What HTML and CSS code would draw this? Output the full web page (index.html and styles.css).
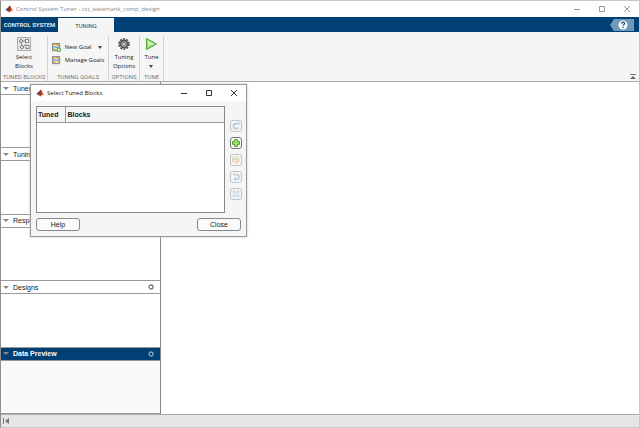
FILE: index.html
```
<!DOCTYPE html>
<html lang="en">
<head>
    <meta charset="UTF-8">
    <meta name="viewport" content="width=device-width, initial-scale=1.0">
    <title>Control System Tuner</title>
    <link rel="stylesheet" href="styles.css">
</head>
<body>
    <!-- Shared icons -->
    <svg class="symbols" aria-hidden="true">
        <symbol id="logo" viewBox="0 0 16 16">
            <path d="M0 9l5-3 2 2-3 4z" fill="#3f86b5"/>
            <path d="M5 6c2 0 3-5 5-5L8 9l-3 4-1-1z" fill="#5c2a30"/>
            <path d="M10 1c2 2 4 8 6 12-2-2-3-2-5 0-1 1-2 2-3 2 0-2-1-3-3-3 3-3 3-8 5-11z" fill="#dd5322"/>
            <path d="M10 1c1 4 1 9-2 14 0-2-1-3-3-3 3-3 3-8 5-11z" fill="#9c2b1d"/>
        </symbol>
        <symbol id="minimize" viewBox="0 0 8 8"><path d="M1 4.500h6" stroke="currentColor" fill="none"/></symbol>
        <symbol id="maximize" viewBox="0 0 8 8"><path d="M1.500 1.500h5v5h-5z" stroke="currentColor" fill="none"/></symbol>
        <symbol id="close" viewBox="0 0 8 8"><path d="M1 1l6 6M7 1l-6 6" stroke="currentColor" fill="none"/></symbol>
        <symbol id="goal" viewBox="0 0 10 10">
            <path d="M.5.500h8v8h-8z" fill="#e3eef6" stroke="#6a7680"/>
            <path d="M1 1h2v2H1zM4 1h4v2H4zM1 6h3v2H1zM6 6h2v2H6z" fill="#e8a83c"/>
            <path d="M1 5l2-1 2 1 3-1" stroke="#2b78ac" fill="none"/>
        </symbol>
        <symbol id="menu" viewBox="0 0 8 8"><circle cx="4" cy="4" r="2" fill="none" stroke="currentColor" stroke-width="1.300"/></symbol>
    </svg>

    <div class="app">
        <header class="titlebar">
            <svg class="logo"><use href="#logo"/></svg>
            <h1 class="title">Control System Tuner - cst_watertank_comp_design</h1>
            <div class="window-buttons">
                <button aria-label="Minimize"><svg><use href="#minimize"/></svg></button>
                <button aria-label="Maximize"><svg><use href="#maximize"/></svg></button>
                <button aria-label="Close window"><svg><use href="#close"/></svg></button>
            </div>
        </header>

        <nav class="tabs">
            <button class="tab">CONTROL SYSTEM</button>
            <button class="tab active">TUNING</button>
            <button class="help" aria-label="Help">
                <svg viewBox="0 0 24 12">
                    <path d="M0 6l4-6h20v12H4z" fill="#6f99b8"/>
                    <circle cx="13" cy="6" r="4.500" fill="#f7fafc"/>
                    <path d="M11.600 4.800c0-2.200 3-2 3-.3 0 1-1.500 1.200-1.500 2.300M13.100 7.800v1.200" fill="none" stroke="#253f59" stroke-width="1.200"/>
                </svg>
            </button>
        </nav>

        <div class="ribbon">
            <section class="group">
                <button class="tool">
                    <svg viewBox="0 0 14 14">
                        <path d="M.5.500h13v13H.5z" fill="#e7e7e7" stroke="#aaa"/>
                        <path d="M5 4h4M4 5l1 4M6 10l3-3" fill="none" stroke="#777" stroke-width=".8"/>
                        <circle cx="4" cy="4" r="1.500" fill="#fff" stroke="#555" stroke-width=".8"/>
                        <circle cx="5" cy="10" r="1.500" fill="#fff" stroke="#555" stroke-width=".8"/>
                        <path d="M8.500 2.500h3v3h-3zM9 8.500h3v3H9z" fill="#fff" stroke="#666" stroke-width=".8"/>
                    </svg>
                    Select<br>Blocks
                </button>
                <span class="group-name">TUNED BLOCKS</span>
            </section>
            <section class="group">
                <div class="tool-list">
                    <button class="tool-row">
                        <svg viewBox="0 0 10 10"><use href="#goal"/><circle cx="7.500" cy="7.500" r="2.500" fill="#56a52a"/><path d="M6 7.500h3M7.500 6v3" stroke="#fff" fill="none"/></svg>
                        New Goal <span class="arrow"></span>
                    </button>
                    <button class="tool-row">
                        <svg><use href="#goal"/></svg>
                        Manage Goals
                    </button>
                </div>
                <span class="group-name">TUNING GOALS</span>
            </section>
            <section class="group">
                <button class="tool">
                    <svg viewBox="0 0 14 14">
                        <circle cx="7" cy="7" r="5" fill="none" stroke="#484848" stroke-width="1.600" stroke-dasharray="2 1.140"/>
                        <circle cx="7" cy="7" r="3.500" fill="#ccc" stroke="#555" stroke-width="1.800"/>
                        <circle cx="7" cy="7" r="1.500" fill="#f5f5f5" stroke="#555" stroke-width=".8"/>
                    </svg>
                    Tuning<br>Options
                </button>
                <span class="group-name">OPTIONS</span>
            </section>
            <section class="group">
                <button class="tool">
                    <svg viewBox="0 0 14 14"><path d="M2.500 1.500l10 5.500-10 5.500z" fill="#a5e088" stroke="#4da22e"/><path d="M4 4l6 3-6 1z" fill="#d3f3c2"/></svg>
                    Tune<span class="arrow"></span>
                </button>
                <span class="group-name">TUNE</span>
            </section>
            <button class="collapse" aria-label="Collapse toolstrip">
                <svg viewBox="0 0 6 6"><path d="M0 .5h6" stroke="#777"/><path d="M3 2l3 3H0z" fill="#666"/></svg>
            </button>
        </div>

        <main class="workspace">
            <aside class="sidebar">
                <section class="panel">
                    <h2><span class="arrow"></span>Tuned Blocks</h2>
                    <div class="panel-body"></div>
                </section>
                <section class="panel">
                    <h2><span class="arrow"></span>Tuning Goals</h2>
                    <div class="panel-body"></div>
                </section>
                <section class="panel">
                    <h2><span class="arrow"></span>Responses</h2>
                    <div class="panel-body"></div>
                </section>
                <section class="panel">
                    <h2><span class="arrow"></span>Designs <button aria-label="Designs menu"><svg><use href="#menu"/></svg></button></h2>
                    <div class="panel-body"></div>
                </section>
                <section class="panel selected">
                    <h2><span class="arrow"></span>Data Preview <button aria-label="Data preview menu"><svg><use href="#menu"/></svg></button></h2>
                    <div class="panel-body"></div>
                </section>
            </aside>
            <div class="document"></div>
        </main>

        <footer class="statusbar">
            <button class="rewind" aria-label="Hide side panel">
                <svg viewBox="0 0 6 6"><path d="M.5 0v6" stroke="#777"/><path d="M6 0v6L2 3z" fill="#777"/></svg>
            </button>
        </footer>

        <div class="dialog" role="dialog" aria-labelledby="dialogTitle">
            <div class="titlebar">
                <svg class="logo"><use href="#logo"/></svg>
                <h2 class="title" id="dialogTitle">Select Tuned Blocks</h2>
                <div class="window-buttons">
                    <button aria-label="Minimize dialog"><svg><use href="#minimize"/></svg></button>
                    <button aria-label="Maximize dialog"><svg><use href="#maximize"/></svg></button>
                    <button aria-label="Close dialog"><svg><use href="#close"/></svg></button>
                </div>
            </div>
            <div class="dialog-content">
                <div class="table-box">
                    <table>
                        <thead>
                            <tr>
                                <th class="tuned">Tuned</th>
                                <th>Blocks</th>
                            </tr>
                        </thead>
                        <tbody></tbody>
                    </table>
                </div>
                <div class="actions">
                    <button disabled aria-label="Refresh"><svg viewBox="0 0 8 8"><path d="M5 2H2.500Q1.500 2 1.500 4t1 2.500H6.500" fill="none" stroke="#5c93bd" stroke-width="1.800"/><path d="M4.500 0H7.500v4z" fill="#5c93bd"/></svg></button>
                    <button aria-label="Add blocks"><svg viewBox="0 0 8 8"><path d="M2.700.5h2.600v2.200h2.200v2.600H5.300v2.200H2.700V5.300H.5V2.700h2.200z" fill="#a4e673" stroke="#4b9c26"/></svg></button>
                    <button disabled aria-label="Edit blocks"><svg viewBox="0 0 8 8"><path d="M.5 1h6v5h-6zM.5 3.500h6M3.500 1v5" fill="#f4ead9" stroke="#b19669" stroke-width=".8"/><path d="M4 7l3-4 1 1-3 4z" fill="#dc8e45"/></svg></button>
                    <button disabled aria-label="Highlight block"><svg viewBox="0 0 8 8"><path d="M1 1.500h3q3 0 3 2.500T4 6.500" fill="none" stroke="#5c93bd" stroke-width="1.600"/><path d="M1 6l3-2v4z" fill="#5c93bd"/></svg></button>
                    <button disabled aria-label="Remove blocks"><svg viewBox="0 0 8 8"><path d="M.7 2l1.300-1.300 2 2 2-2L7.300 2l-2 2 2 2L6 7.300l-2-2-2 2L.7 6l2-2z" fill="#e1edf5" stroke="#5c93bd"/></svg></button>
                </div>
            </div>
            <div class="dialog-footer">
                <button>Help</button>
                <button>Close</button>
            </div>
        </div>
    </div>
</body>
</html>
```
FILE: styles.css
```
* {
    box-sizing: border-box;
}
body {
    margin: 0;
    font-family: "Open Sans", "Noto Sans", sans-serif;
    font-size: 6px;
    color: #222;
}
button {
    margin: 0;
    padding: 0;
    border: none;
    background: none;
    font: inherit;
    color: inherit;
}
h1, h2 {
    margin: 0;
    font-size: inherit;
    font-weight: normal;
}
svg {
    display: block;
}
.symbols {
    position: absolute;
    width: 0;
    height: 0;
}
.app {
    position: relative;
    display: flex;
    flex-direction: column;
    height: 100vh;
    border: 1px solid #c8c8c8;
    border-left-color: #8f8f8f;
    background: #fff;
}

/* Title bars */
.titlebar {
    display: flex;
    align-items: center;
    height: 16px;
    padding: 0 8px 0 4px;
    background: #fff;
}
.logo {
    width: 8px;
    height: 8px;
    margin-right: 3px;
}
.title {
    flex: 1;
    color: #888;
}
.window-buttons {
    display: flex;
    gap: 17px;
    color: #999;
}
.window-buttons svg {
    width: 8px;
    height: 8px;
}

/* Toolstrip */
.tabs {
    display: flex;
    align-items: stretch;
    height: 15px;
    padding-right: 5px;
    background: #004075;
    font-family: Roboto, "Open Sans", sans-serif;
}
.tab {
    width: 57px;
    color: #fff;
    white-space: nowrap;
    font-weight: 500;
}
.tab.active {
    width: 56px;
    margin-top: 1px;
    background: #f5f5f5;
    color: #444;
    font-weight: normal;
}
.help {
    align-self: center;
    margin-left: auto;
}
.help svg {
    width: 24px;
    height: 12px;
}
.ribbon {
    display: flex;
    height: 50px;
    padding-top: 4px;
    border-bottom: 1px solid #aaa;
    background: #f5f5f5;
}
.group {
    display: flex;
    flex-direction: column;
    align-items: center;
    justify-content: space-between;
    padding: 0 2px;
    border-right: 1px solid #d2d2d2;
}
.group:nth-child(1) {
    width: 47px;
}
.group:nth-child(2) {
    width: 61px;
}
.group:nth-child(3) {
    width: 31px;
}
.group:nth-child(4) {
    width: 24px;
}
.group-name {
    line-height: 8px;
    font-family: Roboto, "Open Sans", sans-serif;
    color: #777;
    white-space: nowrap;
}
.tool {
    line-height: 9px;
}
.tool svg {
    width: 14px;
    height: 14px;
    margin: 1px auto 2px;
}
.arrow {
    display: inline-block;
    border: 2px solid transparent;
    border-top: 3px solid #444;
    border-bottom: none;
}
.tool .arrow {
    width: 4px;
    display: block;
    margin: 3px auto 0;
}
.tool-list {
    display: flex;
    flex-direction: column;
    gap: 3px;
    padding-top: 6px;
}
.tool-row {
    display: flex;
    align-items: center;
    gap: 4px;
    height: 10px;
    white-space: nowrap;
}
.tool-row svg {
    width: 9px;
    height: 9px;
}
.tool-row .arrow {
    margin-left: 2px;
}
.collapse {
    align-self: flex-end;
    margin: 0 3px 1px auto;
}
.collapse svg {
    width: 6px;
    height: 6px;
}

/* Side panels */
.workspace {
    display: flex;
    flex: 1;
    min-height: 0;
}
.sidebar {
    display: flex;
    flex-direction: column;
    width: 25%;
    border-right: 1px solid #888;
    font-family: "Liberation Sans", Arial, sans-serif;
    font-size: 7px;
}
.panel {
    display: flex;
    flex-direction: column;
    flex: 1;
}
.panel h2 {
    display: flex;
    align-items: center;
    height: 13px;
    padding: 0 5px 0 2px;
    border-bottom: 1px solid #999;
}
.panel .arrow {
    margin-right: 4px;
    border-width: 3px 3px 0;
    border-top-color: #888;
}
.panel h2 button {
    margin-left: auto;
    color: #777;
}
.panel h2 svg {
    width: 8px;
    height: 8px;
}
.panel-body {
    flex: 1;
    border-bottom: 1px solid #999;
}
.panel.selected h2 {
    background: #004075;
    color: #fff;
    font-weight: bold;
}
.panel.selected h2 button {
    color: #83a9c6;
}
.panel.selected .panel-body {
    background: #fafafa;
}
.document {
    flex: 1;
}
.statusbar {
    display: flex;
    align-items: center;
    height: 13px;
    padding-left: 2px;
    border-top: 1px solid #aaa;
    background: #e6e6e6;
}
.rewind svg {
    width: 6px;
    height: 6px;
}

/* Dialog window */
.dialog {
    position: absolute;
    left: 29px;
    top: 83px;
    width: 217px;
    border: 1px solid #999;
    background: #f5f5f5;
    font-family: "Liberation Sans", Arial, sans-serif;
    font-size: 7px;
    box-shadow: 0 0 2px #bbb;
}
.dialog .titlebar {
    font-family: "Open Sans", "Noto Sans", sans-serif;
    font-size: 6px;
}
.dialog .logo {
    margin-left: 1px;
}
.dialog .title {
    color: #111;
}
.dialog .window-buttons {
    color: #333;
}
.dialog-content {
    display: flex;
    gap: 5px;
    padding: 5px 4px 0 5px;
}
.table-box {
    flex: 1;
    height: 107px;
    border: 1px solid #888;
    background: #fff;
}
table {
    width: 100%;
    border-collapse: collapse;
}
th {
    height: 15px;
    padding: 0 2px;
    border-bottom: 1px solid #999;
    background: #f5f5f5;
    text-align: left;
}
th.tuned {
    width: 28px;
    border-right: 1px solid #999;
    padding: 0 1px;
}
.actions {
    display: flex;
    flex-direction: column;
    gap: 5px;
    padding-top: 14px;
}
.actions button {
    display: flex;
    align-items: center;
    justify-content: center;
    width: 12px;
    height: 12px;
    border: 1px solid #777;
    border-radius: 3px;
    background: #fafafa;
}
.actions button:disabled {
    opacity: 0.4;
}
.actions svg {
    width: 8px;
    height: 8px;
}
.dialog-footer {
    display: flex;
    justify-content: space-between;
    padding: 5px;
}
.dialog-footer button {
    width: 44px;
    height: 13px;
    border: 1px solid #888;
    border-radius: 3px;
    background: #fbfbfb;
}
```
